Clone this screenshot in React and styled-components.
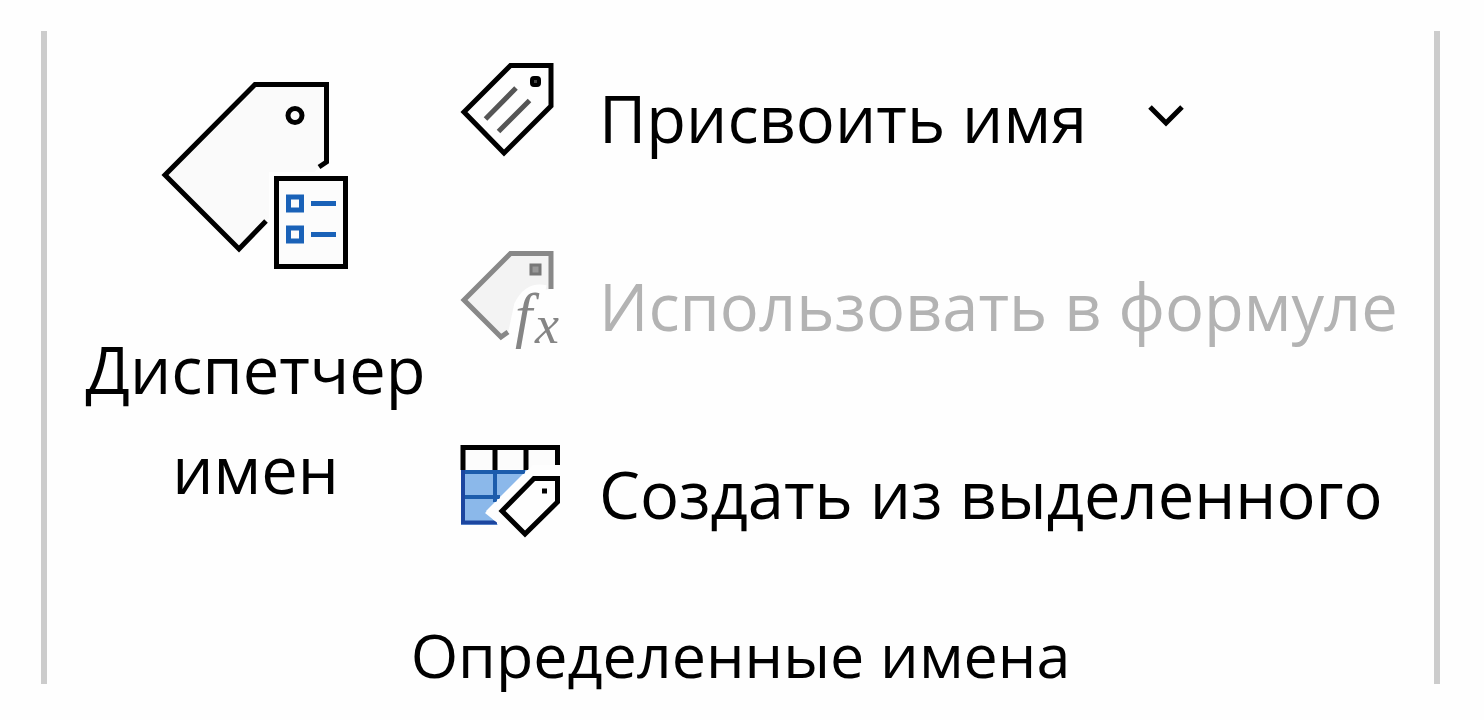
import React from 'react';
import styled, { createGlobalStyle } from 'styled-components'

const colors = {
    text: '#000',
    disabled: '#b3b3b3',
    divider: '#cccccc',
    surface: '#fefefe',
    blue: '#1a62b8',
}

const GlobalStyle = createGlobalStyle`
    *, *::before, *::after {
        box-sizing: border-box;
    }
    body {
        margin: 0;
        background: ${colors.surface};
        font-family: "Segoe UI", "Open Sans", "Noto Sans", sans-serif;
        font-size: 65px;
    }
`

const Ribbon = styled.main`
    padding: 31px 44px 32px 41px;
`

const Group = styled.section`
    display: flex;
    flex-direction: column;
    border: solid ${colors.divider};
    border-width: 0 6px;
    padding: 0 4px;
`

const GroupBody = styled.div`
    display: grid;
    grid-template-columns: 409px 1fr;
    align-items: start;
`

const GroupTitle = styled.h2`
    margin: 76px 0 0;
    font-size: 61px;
    font-weight: 400;
    line-height: 58px;
    text-align: center;
    color: ${colors.text};
`

const RibbonButton = styled.button`
    display: flex;
    align-items: center;
    padding: 0;
    border: 0;
    background: none;
    font: inherit;
    color: ${colors.text};
    white-space: nowrap;
    &:disabled {
        color: ${colors.disabled};
    }
`

const LargeButton = styled(RibbonButton)`
    flex-direction: column;
    gap: 49px;
    padding-top: 49px;
    line-height: 100px;
    white-space: normal;
`

const Commands = styled.div`
    display: flex;
    flex-direction: column;
    align-items: flex-start;
    gap: 76px;
    padding-top: 31px;
`

const CommandButton = styled(RibbonButton)`
    align-items: flex-start;
    gap: 31px;
    line-height: 112px;
`

const Icon = styled.svg`
    display: block;
    flex: none;
    fill: none;
    stroke-width: 5;
`

const Caret = styled(Icon)`
    align-self: center;
    margin-left: 28px;
`

const FormulaLetter = styled.text`
    font-family: "Liberation Serif", serif;
    font-style: italic;
    fill: #858585;
`

const NameManagerIcon = () => (
    <Icon width="190" height="190" viewBox="160 80 190 190" aria-hidden="true">
        <path d="M265 221 L238 249 L164 175 L254 84.5 H325.500 V162 L318 167" fill="#fafafa" stroke="#000" />
        <path d="M265 221 V167 H318 L265 221" fill="#fafafa" />
        <circle cx="294" cy="115.500" r="7" stroke="#000" />
        <path d="M268 172 H350 V270 H268 Z" fill={colors.surface} />
        <rect x="275.500" y="178.500" width="69" height="88" fill="#fcfcfc" stroke="#000" />
        <g stroke={colors.blue}>
            <rect x="287.500" y="197" width="13" height="13" />
            <rect x="287.500" y="228" width="13" height="13" />
            <path d="M310 203.500 H335 M310 234.500 H335" />
        </g>
    </Icon>
)

const DefineNameIcon = () => (
    <Icon width="108" height="108" viewBox="460 62 108 108" aria-hidden="true">
        <path d="M464 112 L510.500 65.500 H551 V106 L504 153 Z" fill={colors.surface} stroke="#000" />
        <rect x="532" y="78" width="7" height="7" rx="2" fill="#444" stroke="#000" strokeWidth="4" />
        <path d="M485.500 119 L516 88 M498.500 131.500 L529.500 100.500" stroke="#555" />
    </Icon>
)

const UseInFormulaIcon = () => (
    <Icon width="108" height="108" viewBox="460 250 108 108" aria-hidden="true">
        <path d="M508 333 L501 337 L464 300 L510.500 253.500 H551 V289 L532 291 L520 304 Z" fill="#f3f3f3" />
        <path d="M551 289 V253.500 H510.500 L464 300 L501 337 L508 332" stroke="#888" />
        <rect x="531" y="265" width="9" height="9" fill="#999" stroke="#777" strokeWidth="3" />
        <path d="M516 334 L522 306 Q530 290 545 293" stroke={colors.surface} strokeWidth="16" />
        <FormulaLetter x="515" y="336" fontSize="62">f</FormulaLetter>
        <FormulaLetter x="535" y="343" fontSize="54">x</FormulaLetter>
    </Icon>
)

const CreateFromSelectionIcon = () => (
    <Icon width="108" height="108" viewBox="460 438 108 108" aria-hidden="true">
        <path d="M463 470 V447.500 H557.500 V469 M495 447 V470 M526 447 V470" fill="#fcfcfc" stroke="#000" strokeWidth="5" />
        <path d="M461 470 H527 L486 511 L498 525 H461 Z" fill="#8bb8ea" />
        <path d="M461 472 H525 M461 497 H500 M495 470 V502" stroke="#1c5cac" strokeWidth="4" />
        <path d="M463 470 V522.500 H497" stroke="#1c46a0" strokeWidth="4" />
        <path d="M485 513 L533 465 H568 V505 L526 546 Z" fill={colors.surface} />
        <path d="M502 511 L534 478.500 H557.500 V502 L525 534 Z" fill={colors.surface} stroke="#000" />
        <rect x="542" y="488.500" width="5" height="5" fill="#000" />
    </Icon>
)

const ChevronIcon = () => (
    <Caret width="40" height="28" viewBox="1145 103 40 28" aria-hidden="true">
        <path d="M1149 106 L1165 122 L1181 106" stroke="#000" />
    </Caret>
)

const commands = [
    { label: 'Присвоить имя', icon: DefineNameIcon, menu: true },
    { label: 'Использовать в формуле', icon: UseInFormulaIcon, disabled: true },
    { label: 'Создать из выделенного', icon: CreateFromSelectionIcon },
]

const App = () => (
    <>
        <GlobalStyle />
        <Ribbon>
            <Group aria-labelledby="defined-names">
                <GroupBody>
                    <LargeButton type="button">
                        <NameManagerIcon />
                        <span>Диспетчер имен</span>
                    </LargeButton>
                    <Commands>
                        {commands.map(({ label, icon: CommandIcon, menu, disabled }) => (
                            <CommandButton key={label} type="button" disabled={disabled} aria-haspopup={menu ? 'menu' : undefined}>
                                <CommandIcon />
                                <span>{label}</span>
                                {menu && <ChevronIcon />}
                            </CommandButton>
                        ))}
                    </Commands>
                </GroupBody>
                <GroupTitle id="defined-names">Определенные имена</GroupTitle>
            </Group>
        </Ribbon>
    </>
);

export default App;
